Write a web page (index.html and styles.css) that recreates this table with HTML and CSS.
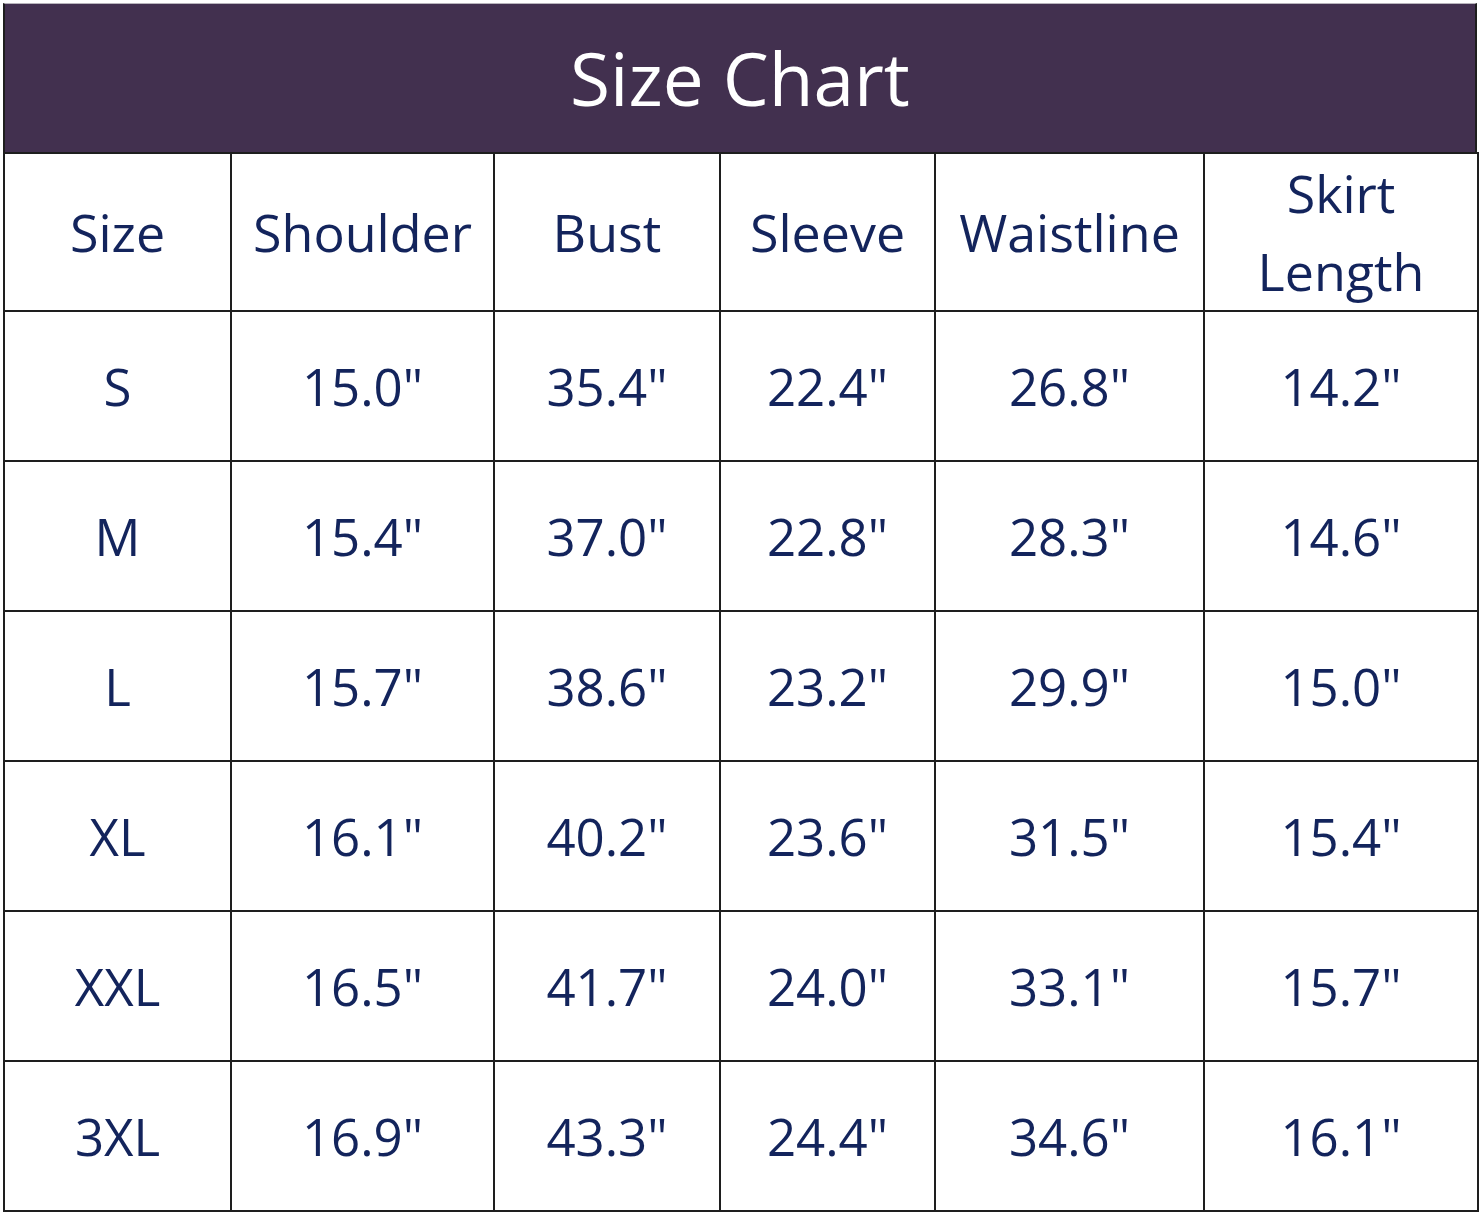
FILE: index.html
```html
<!DOCTYPE html>
<html lang="en">
<head>
<meta charset="utf-8">
<title>Size Chart</title>
<link rel="stylesheet" href="styles.css">
</head>
<body>
<div class="chart">
  <div class="title">Size Chart</div>
  <table class="grid">
    <colgroup>
      <col class="c1"><col class="c2"><col class="c3"><col class="c4"><col class="c5"><col class="c6">
    </colgroup>
    <thead>
      <tr>
        <th>Size</th><th>Shoulder</th><th>Bust</th><th>Sleeve</th><th>Waistline</th><th>Skirt<br>Length</th>
      </tr>
    </thead>
    <tbody>
      <tr><td>S</td><td>15.0"</td><td>35.4"</td><td>22.4"</td><td>26.8"</td><td>14.2"</td></tr>
      <tr><td>M</td><td>15.4"</td><td>37.0"</td><td>22.8"</td><td>28.3"</td><td>14.6"</td></tr>
      <tr><td>L</td><td>15.7"</td><td>38.6"</td><td>23.2"</td><td>29.9"</td><td>15.0"</td></tr>
      <tr><td>XL</td><td>16.1"</td><td>40.2"</td><td>23.6"</td><td>31.5"</td><td>15.4"</td></tr>
      <tr><td>XXL</td><td>16.5"</td><td>41.7"</td><td>24.0"</td><td>33.1"</td><td>15.7"</td></tr>
      <tr><td>3XL</td><td>16.9"</td><td>43.3"</td><td>24.4"</td><td>34.6"</td><td>16.1"</td></tr>
    </tbody>
  </table>
</div>
</body>
</html>
```
FILE: styles.css
```css
html, body {
  margin: 0;
  padding: 0;
  background: #ffffff;
}
body {
  font-family: "Open Sans", "Noto Sans", "Liberation Sans", sans-serif;
}
.chart {
  width: 1474px;
  margin: 3px 0 0 3px;
}
.title {
  box-sizing: border-box;
  height: 149px;
  background: #42304f;
  border-left: 2px solid #1e1e1e;
  border-right: 2px solid #1e1e1e;
  border-top: 1px solid #b8b4bc;
  display: flex;
  align-items: center;
  justify-content: center;
  color: #ffffff;
  font-size: 73px;
  line-height: 1;
  padding-bottom: 2px;
}
.grid {
  width: 1474px;
  table-layout: fixed;
  border-collapse: collapse;
  color: #13245c;
}
.c1 { width: 227px; }
.c2 { width: 263px; }
.c3 { width: 226px; }
.c4 { width: 215px; }
.c5 { width: 269px; }
.c6 { width: 274px; }
.grid th,
.grid td {
  border: 2px solid #1e1e1e;
  text-align: center;
  vertical-align: middle;
  font-weight: 400;
  padding: 0;
  white-space: nowrap;
}
.grid th {
  font-size: 52px;
  line-height: 78px;
}
.grid thead tr {
  height: 155px;
}
.grid tbody tr {
  height: 150px;
}
.grid td {
  font-size: 51px;
  line-height: 1;
}
```
